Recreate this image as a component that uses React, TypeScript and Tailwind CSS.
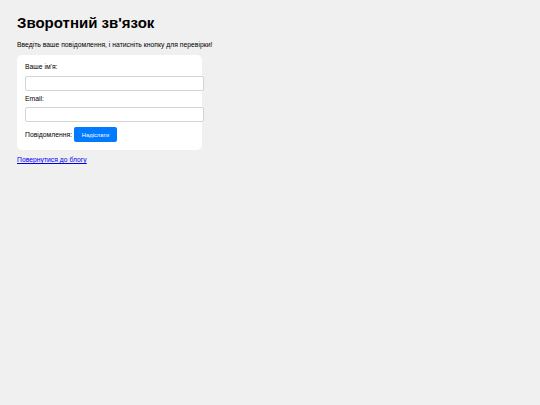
export default function App() {
  return (
    <div className="min-h-[405px] w-full bg-[#f0f0f0] px-[17px] pt-[14px] text-black" style={{ fontFamily: '"Liberation Sans", Arial, sans-serif' }}>
      <h1 className="m-0 text-[15px] font-bold leading-[18px]">Зворотний зв'язок</h1>
      <p className="mt-[9px] text-[6.8px] leading-[8px]">Введіть ваше повідомлення, і натисніть кнопку для перевірки!</p>
      <div className="mt-[6px] w-[185px] rounded-[5px] bg-white p-[8px]">
        <div className="text-[6.8px] leading-[8px]">Ваше ім'я:</div>
        <input className="mt-[5px] box-border block h-[15px] w-[179px] rounded-[2px] border border-[#d4d4d4] bg-white px-[4px] text-[7px] outline-none" />
        <div className="mt-[4px] text-[6.8px] leading-[8px]">Email:</div>
        <input className="mt-[4px] box-border block h-[15px] w-[179px] rounded-[2px] border border-[#d4d4d4] bg-white px-[4px] text-[7px] outline-none" />
        <div className="mt-[5px] flex items-center gap-[2px] text-[6.8px] leading-[8px]">
          <span>Повідомлення:</span>
          <button className="h-[15px] w-[43px] rounded-[2px] bg-[#007bff] text-[5.8px] leading-[6px] text-white">Надіслати</button>
        </div>
      </div>
      <a href="#" className="mt-[6px] block w-fit text-[6.8px] leading-[8px] text-[#0000ee] underline">Повернутися до блогу</a>
    </div>
  );
}
